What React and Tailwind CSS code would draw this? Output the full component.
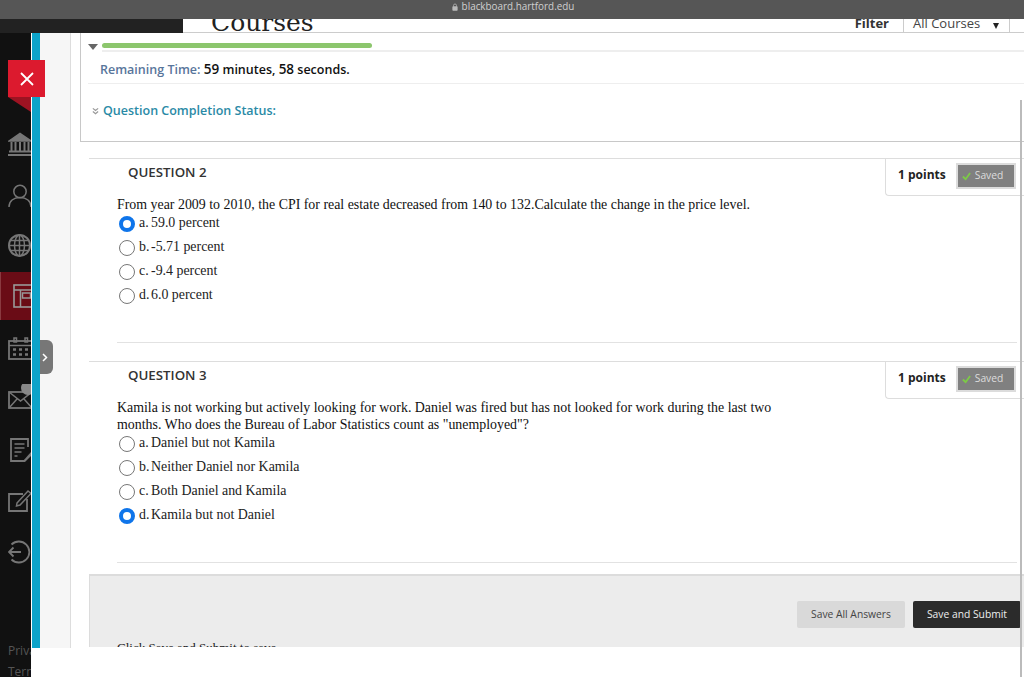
const sans = 'font-["Open_Sans",sans-serif]';
const serif = 'font-["Liberation_Serif",serif]';

const Icon = ({ children, color = '#767676' }) => (
  <svg width="30" height="30" viewBox="0 0 30 30" fill="none" stroke={color} strokeWidth="1.5" className="shrink-0">
    {children}
  </svg>
);

const navItems = [
  {
    key: 'institution',
    icon: (
      <Icon>
        <path d="M1 12 L12 4.5 L23 12 Z" fill="#767676" />
        <path d="M1 22.5h22M0 26h24" strokeWidth="2" />
        <path d="M3.5 13v9M7.5 13v9M12 13v9M16.5 13v9M20.5 13v9" strokeWidth="2" />
      </Icon>
    ),
  },
  {
    key: 'profile',
    icon: (
      <Icon>
        <circle cx="12" cy="11.5" r="6.2" />
        <path d="M1 27c0-6 4.5-9.5 11-9.5S23 21 23 27" />
      </Icon>
    ),
  },
  {
    key: 'activity',
    icon: (
      <Icon>
        <circle cx="11.5" cy="14.5" r="10.5" strokeWidth="2" />
        <ellipse cx="11.5" cy="14.5" rx="5" ry="10.5" />
        <path d="M1 14.5h21M2.5 9.5h18M2.5 19.5h18M11.5 4v21" />
      </Icon>
    ),
  },
  {
    key: 'courses',
    active: true,
    icon: (
      <Icon color="#999">
        <rect x="6" y="4" width="26" height="22" strokeWidth="1.6" />
        <path d="M6 9h26M12.5 9v17" />
        <rect x="14.5" y="12" width="8" height="5" />
      </Icon>
    ),
  },
  {
    key: 'calendar',
    icon: (
      <Icon>
        <rect x="1" y="8" width="24" height="18" strokeWidth="1.8" />
        <path d="M1 12.5h24" />
        <path d="M6 5h2.5v4H6zM17 5h2.5v4H17z" />
        <path d="M5 16.5h3M11 16.5h3M17 16.5h3M5 21.5h3M11 21.5h3M17 21.5h3" strokeWidth="2.6" />
      </Icon>
    ),
  },
  {
    key: 'messages',
    icon: (
      <Icon>
        <rect x="1" y="8" width="23" height="16" strokeWidth="1.8" />
        <path d="M1 8l11.5 9L24 8M1 24l8-9M24 24l-8-9" />
        <circle cx="20" cy="4" r="7" fill="#888" stroke="none" />
      </Icon>
    ),
  },
  {
    key: 'grades',
    icon: (
      <Icon>
        <path d="M20 12V4H3v22h14" strokeWidth="1.8" />
        <path d="M6.5 9h10M6.5 13h10M6.5 17h7M6.5 21h3" strokeWidth="1.6" />
        <path d="M15 26l8-9 2 2-8 8z" fill="#767676" stroke="none" />
      </Icon>
    ),
  },
  {
    key: 'assignments',
    icon: (
      <Icon>
        <path d="M15 8H1v17h18V13" strokeWidth="1.8" />
        <path d="M9 17l11-12 3 2.5L12 19l-3.5 1z" />
      </Icon>
    ),
  },
  {
    key: 'signout',
    icon: (
      <Icon>
        <path d="M3.5 7.5a10.5 10.5 0 1 1 0 15" strokeWidth="1.8" />
        <path d="M13 15H1M5.5 10.5L1 15l4.5 4.5" strokeWidth="1.8" />
      </Icon>
    ),
  },
];

function Radio({ checked }) {
  if (checked) {
    return <span className="block w-[16px] h-[16px] rounded-full border-[4px] border-[#0f75ea] bg-white shrink-0" />;
  }
  return <span className="block w-[16px] h-[16px] rounded-full border-[1.5px] border-[#777] bg-white shrink-0" />;
}

function Question({ number, lines, options }) {
  return (
    <section className="border-t border-[#ddd]">
      <div className="flex justify-between h-[36px]">
        <h2 className={`${sans} pl-[39px] pt-[4px] text-[13.3px] leading-[18px] font-semibold text-[#333]`}>QUESTION {number}</h2>
        <div className="w-[139px] h-[37px] border-l border-b border-[#ddd] rounded-bl-[4px] flex items-center gap-[10px] pl-[12px] pb-[2px]">
          <span className={`${sans} text-[12px] leading-[16px] -translate-y-px font-bold text-[#222] whitespace-nowrap`}>1 points</span>
          <span className="w-[60px] h-[26px] bg-[#808080] border-2 border-[#dcdcdc] flex items-center gap-[4px] pl-[4px]">
            <svg width="9" height="9" viewBox="0 0 10 10" fill="none" stroke="#7ccb45" strokeWidth="2"><path d="M1 5l3 3 5-7" /></svg>
            <span className={`${sans} text-[10.3px] text-[#ddd]`}>Saved</span>
          </span>
        </div>
      </div>
      <div className={`${serif} pl-[28px] mt-px text-[#111] text-[13.9px] leading-[17px]`}>
        {lines.map((line) => <p key={line} className="whitespace-nowrap">{line}</p>)}
      </div>
      <ul className={`${serif} pl-[30px] mt-px flex flex-col gap-[6px] text-[#222] text-[13.9px] leading-[18px]`}>
        {options.map((o) => (
          <li key={o.label} className="flex items-center h-[18px]">
            <span className="translate-y-[1px]"><Radio checked={o.checked} /></span>
            <span className="ml-[4px] w-[12px]">{o.label}</span>
            <span>{o.text}</span>
          </li>
        ))}
      </ul>
      <div className="ml-[28px] mr-[7px] mt-[38px] border-t border-[#e2e2e2]" />
    </section>
  );
}

export default function App() {
  return (
    <div className="relative w-[1024px] h-[677px] overflow-hidden bg-white">
      <div className="h-[19px] bg-[#565656] flex items-center justify-center gap-[4px] pb-[6px] pl-[2px]">
        <svg width="6" height="8" viewBox="0 0 8 10" fill="#bbb"><rect x="0.5" y="4" width="7" height="6" rx="1" /><path d="M2 4.5V3a2 2 0 0 1 4 0v1.5" fill="none" stroke="#bbb" /></svg>
        <span className={`${sans} text-[9.9px] text-[#d0d0d0] leading-none`}>blackboard.hartford.edu</span>
      </div>

      <div className="h-[14px] flex">
        <div className="w-[183px] bg-[#222]" />
        <div className="flex-1 overflow-hidden border-b border-[#ccc] flex items-end">
          <span className='font-["DejaVu_Serif",serif] ml-[28px] text-[25px] leading-[29px] -mb-[5px] text-[#222]'>Courses</span>
          <span className={`${sans} ml-auto text-[13px] font-bold text-[#333] leading-[18px]`}>Filter</span>
          <div className="ml-[14px] mr-[14px] w-[107px] h-full border-x border-[#ccc] flex items-end pl-[9px] gap-[13px]">
            <span className={`${sans} text-[13px] text-[#444] leading-[18px] whitespace-nowrap`}>All Courses</span>
            <span className="mb-[3px] border-x-[3.5px] border-x-transparent border-t-[6px] border-t-[#222]" />
          </div>
        </div>
      </div>

      <div className="flex h-[644px]">
        <aside className="w-[31px] bg-[#111] overflow-hidden pt-[85px] shrink-0">
          {navItems.map((item) => (
            item.active ? (
              <div key={item.key} className="h-[48px] mt-[1px] mb-[2px] flex items-center pl-[7px] bg-[#6a0c16] border-l border-[#8a3a40]">
                {item.icon}
              </div>
            ) : (
              <div key={item.key} className="h-[51px] flex items-center pl-[8px]">
                {item.icon}
              </div>
            )
          ))}
          <div className={`${sans} pl-[8px] pt-[63px] text-[12px] leading-[21px] text-[#555]`}>
            <p>Privacy</p>
            <p>Terms</p>
          </div>
        </aside>

        <div className="flex-1 min-w-0">
          <div className="h-[615px] flex border-l border-white overflow-hidden">
            <div className="w-[8px] bg-[#0da3c9] shrink-0" />
            <div className="w-[31px] bg-[#f6f6f6] border-r border-[#ddd] shrink-0" />
            <main className="flex-1 min-w-0">
              <div className="ml-[9px] h-[109px] border-l border-b border-[#c8c8c8]">
                <div className="flex items-center h-[26px] pl-[7px] pt-[2px]">
                  <span className="border-x-[5px] border-x-transparent border-t-[6px] border-t-[#666]" />
                  <div className="ml-[4px] flex-1 border-b-2 border-[#eee] pb-[2px]">
                    <div className="w-[270px] h-[5px] rounded-full bg-[#8cc66d]" />
                  </div>
                </div>
                <div className={`${sans} ml-[7px] h-[25px] pl-[12px] border-b border-[#eee] text-[12.5px] leading-[20px] font-semibold`}>
                  <span className="text-[#58759b]">Remaining Time: </span>
                  <span className="text-[#111]"><span className="text-[13.5px]">59</span> minutes, <span className="text-[13.5px]">58</span> seconds.</span>
                </div>
                <div className={`${sans} pl-[11px] pt-[17px] flex items-center gap-[4px] text-[12.5px] leading-[20px] font-semibold text-[#2a8aa6]`}>
                  <svg width="7" height="8" viewBox="0 0 8 8" fill="none" stroke="#999" strokeWidth="1.4"><path d="M1 1l3 2.5L7 1M1 4.5L4 7l3-2.5" /></svg>
                  <span>Question Completion Status:</span>
                </div>
              </div>

              <div className="ml-[18px] mt-[16px] flex flex-col gap-[18px]">
                <Question
                  number={2}
                  lines={['From year 2009 to 2010, the CPI for real estate decreased from 140 to 132.Calculate the change in the price level.']}
                  options={[
                    { label: 'a.', text: '59.0 percent', checked: true },
                    { label: 'b.', text: '-5.71 percent' },
                    { label: 'c.', text: '-9.4 percent' },
                    { label: 'd.', text: '6.0 percent' },
                  ]}
                />
                <Question
                  number={3}
                  lines={[
                    'Kamila is not working but actively looking for work. Daniel was fired but has not looked for work during the last two',
                    'months. Who does the Bureau of Labor Statistics count as "unemployed"?',
                  ]}
                  options={[
                    { label: 'a.', text: 'Daniel but not Kamila' },
                    { label: 'b.', text: 'Neither Daniel nor Kamila' },
                    { label: 'c.', text: 'Both Daniel and Kamila' },
                    { label: 'd.', text: 'Kamila but not Daniel', checked: true },
                  ]}
                />
              </div>

              <div className="ml-[18px] mt-[11px] h-[73px] overflow-hidden bg-[#ececec] border-l border-t-2 border-[#dcdcdc]">
                <div className={`${sans} flex justify-end gap-[8px] pt-[25px] pr-[3px] text-[10.3px]`}>
                  <span className="w-[108px] h-[27px] rounded-[2px] bg-[#d9d9d9] text-[#444] flex items-center justify-center">Save All Answers</span>
                  <span className="w-[108px] h-[27px] rounded-[2px] bg-[#2b2b2b] text-[#eee] flex items-center justify-center">Save and Submit</span>
                </div>
                <p className={`${serif} ml-[27px] mt-[12px] text-[13px] leading-[16px] text-[#222] whitespace-nowrap`}>Click Save and Submit to save</p>
              </div>
            </main>
          </div>
        </div>
      </div>

      {/* floating close tab */}
      <div className="absolute left-[8px] top-[60px] w-[37px] h-[37px] bg-[#dc1a2e] flex items-center justify-center">
        <svg width="14" height="14" viewBox="0 0 14 14" stroke="#fff" strokeWidth="1.8"><path d="M1 1l12 12M13 1L1 13" /></svg>
      </div>
      <div className="absolute left-[8px] top-[97px] w-0 h-0 border-t-[15px] border-t-[#9d1322] border-l-[23px] border-l-transparent" />

      {/* course menu toggle */}
      <div className="absolute left-[40px] top-[340px] w-[13px] h-[34px] bg-[#777] rounded-r-[6px] flex items-center pl-[2px]">
        <svg width="6" height="9" viewBox="0 0 6 9" fill="none" stroke="#fff" strokeWidth="1.5"><path d="M1 1l3.5 3.5L1 8" /></svg>
      </div>

      {/* page scroll line */}
      <div className="absolute left-[1020px] top-[100px] w-[2px] h-[577px] bg-[#bbb]" />
    </div>
  );
}
